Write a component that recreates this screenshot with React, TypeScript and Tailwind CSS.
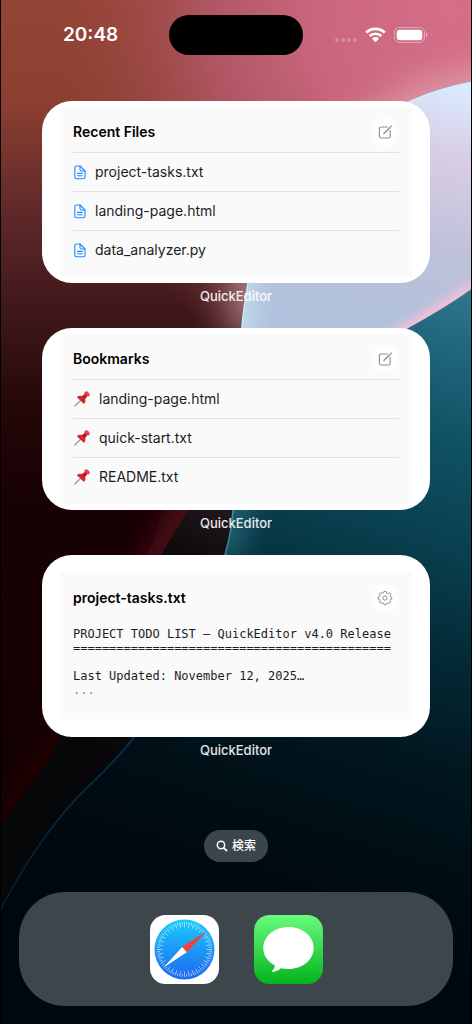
import React from "react";

const SANS = "font-['Inter','Noto_Sans_CJK_JP',sans-serif]";

const BLADE_EDGE =
  "M474 82 Q440 88 411 101 C310 150 262 215 248 283 C246 296 243 312 242 328 C238 400 244 450 233 510 C232 527 229 541 225 555 C206 625 172 684 134 737 C116 762 94 780 74 801 C46 832 22 868 0 911";
const BAND_EDGE = "M260 410 C230 445 207 480 188 510 L161 555 C120 625 92 684 61 737 C46 766 24 797 0 827";

function Wallpaper() {
  return (
    <svg
      className="absolute inset-0 -z-10 h-full w-full"
      viewBox="0 0 472 1024"
      preserveAspectRatio="xMidYMid slice"
      aria-hidden="true"
    >
      <defs>
        <linearGradient id="wp-base" x1="0" y1="0" x2="0" y2="1024" gradientUnits="userSpaceOnUse">
          <stop offset="0" stopColor="#944434" />
          <stop offset="0.1" stopColor="#8c3f31" />
          <stop offset="0.2" stopColor="#622a2a" />
          <stop offset="0.3" stopColor="#40181c" />
          <stop offset="0.4" stopColor="#240709" />
          <stop offset="0.5" stopColor="#170103" />
          <stop offset="1" stopColor="#100002" />
        </linearGradient>
        <radialGradient id="wp-pink" cx="450" cy="10" r="400" gradientUnits="userSpaceOnUse">
          <stop offset="0" stopColor="#d66e8a" />
          <stop offset="0.35" stopColor="#c9667c" />
          <stop offset="0.6" stopColor="#b05663" />
          <stop offset="1" stopColor="#97463d" stopOpacity="0" />
        </radialGradient>
        <linearGradient id="wp-blade" x1="440" y1="80" x2="360" y2="340" gradientUnits="userSpaceOnUse">
          <stop offset="0" stopColor="#d9ecff" />
          <stop offset="0.25" stopColor="#d9cde6" />
          <stop offset="0.6" stopColor="#bdc1d8" />
          <stop offset="1" stopColor="#afc1dc" />
        </linearGradient>
        <linearGradient id="wp-teal" x1="472" y1="270" x2="270" y2="930" gradientUnits="userSpaceOnUse">
          <stop offset="0" stopColor="#3a7d97" />
          <stop offset="0.1" stopColor="#22697f" />
          <stop offset="0.25" stopColor="#0f5164" />
          <stop offset="0.4" stopColor="#093f4e" />
          <stop offset="0.55" stopColor="#032935" />
          <stop offset="0.7" stopColor="#01171f" />
          <stop offset="0.85" stopColor="#000d14" />
          <stop offset="1" stopColor="#00080e" />
        </linearGradient>
        <linearGradient id="wp-rim" x1="0" y1="80" x2="0" y2="920" gradientUnits="userSpaceOnUse">
          <stop offset="0" stopColor="#c4f5ff" />
          <stop offset="0.3" stopColor="#bdeaf8" />
          <stop offset="0.5" stopColor="#3a93a9" />
          <stop offset="0.62" stopColor="#1e6f88" />
          <stop offset="0.8" stopColor="#08304a" />
          <stop offset="1" stopColor="#041a2e" />
        </linearGradient>
        <linearGradient id="wp-band" x1="230" y1="500" x2="60" y2="800" gradientUnits="userSpaceOnUse">
          <stop offset="0" stopColor="#251a1d" />
          <stop offset="0.2" stopColor="#0f0a0c" />
          <stop offset="1" stopColor="#060709" />
        </linearGradient>
        <linearGradient id="wp-red" x1="0" y1="450" x2="0" y2="830" gradientUnits="userSpaceOnUse">
          <stop offset="0" stopColor="#8a1a2a" />
          <stop offset="0.3" stopColor="#6a1420" />
          <stop offset="0.7" stopColor="#2a0307" />
          <stop offset="1" stopColor="#220206" />
        </linearGradient>
        <filter id="wp-soft" filterUnits="userSpaceOnUse" x="-100" y="-100" width="700" height="1200">
          <feGaussianBlur stdDeviation="20" />
        </filter>
        <filter id="wp-glow" filterUnits="userSpaceOnUse" x="-100" y="-100" width="700" height="1200">
          <feGaussianBlur stdDeviation="14" />
        </filter>
        <filter id="wp-fine" filterUnits="userSpaceOnUse" x="-100" y="-100" width="700" height="1200">
          <feGaussianBlur stdDeviation="4" />
        </filter>
        <clipPath id="wp-clip">
          <path d={`${BLADE_EDGE} L0 1024 L474 1024 Z`} />
        </clipPath>
        <clipPath id="wp-left">
          <path d={`${BAND_EDGE} L0 410 Z`} />
        </clipPath>
      </defs>
      <rect width="472" height="1024" fill="url(#wp-base)" />
      <rect width="472" height="1024" fill="url(#wp-pink)" />
      <path
        d="M520 90 Q440 96 400 125 C330 170 280 220 256 290 L250 335"
        fill="none"
        stroke="#eec3ce"
        strokeOpacity="0.65"
        strokeWidth="44"
        filter="url(#wp-soft)"
      />
      <path d={`${BAND_EDGE} L0 911 L240 911 L260 410 Z`} fill="url(#wp-band)" />
      <g clipPath="url(#wp-left)">
        <path d={BAND_EDGE} fill="none" stroke="url(#wp-red)" strokeOpacity="0.75" strokeWidth="26" filter="url(#wp-glow)" />
      </g>
      <g clipPath="url(#wp-clip)">
        <rect width="474" height="1024" fill="url(#wp-blade)" />
        <path d="M240 270 L236 350" stroke="#dcf4ff" strokeWidth="24" strokeOpacity="0.7" filter="url(#wp-glow)" />
        <path d="M520 254 L474 287 Q413 333 220 420" fill="none" stroke="#f6c0d8" strokeWidth="12" filter="url(#wp-fine)" />
        <path d="M474 287 Q413 333 220 420 L0 900 L0 1024 L474 1024 Z" fill="url(#wp-teal)" />
        <path d="M240 470 L225 560" stroke="#3a8ba0" strokeWidth="26" strokeOpacity="0.6" filter="url(#wp-glow)" />
      </g>
      <path d={BLADE_EDGE} fill="none" stroke="url(#wp-rim)" strokeWidth="1.6" />
    </svg>
  );
}

function WifiIcon() {
  return (
    <svg className="h-4 w-[21px]" viewBox="0 0 21 16" aria-hidden="true">
      <g fill="none" stroke="#fff" strokeWidth="2.7">
        <path d="M1.2 5.6 A13.4 13.4 0 0 1 19.8 5.6" />
        <path d="M4.6 9.1 A8.6 8.6 0 0 1 16.4 9.1" />
      </g>
      <path d="M7 11.5 A5 5 0 0 1 14 11.5 L10.5 15.2 Z" fill="#fff" />
    </svg>
  );
}

function BatteryIcon() {
  return (
    <svg className="h-4 w-[34px]" viewBox="0 0 34 16" aria-hidden="true">
      <rect x="0.5" y="0.5" width="30" height="15" rx="5" fill="none" stroke="#fff" strokeOpacity="0.4" />
      <rect x="2.7" y="2.7" width="25.6" height="10.6" rx="3.2" fill="#fff" />
      <path d="M32 5.5 C33.8 6.2 33.8 9.8 32 10.5 Z" fill="#fff" fillOpacity="0.5" />
    </svg>
  );
}

function StatusBar() {
  return (
    <header className="grid grid-cols-[1fr_134px_1fr] items-center pt-[15px]">
      <time className="pl-[62px] text-[19px] leading-7 font-semibold text-white">20:48</time>
      <div className="h-10 rounded-full bg-black" />
      <div className="flex items-center justify-end gap-2 pr-[43px]">
        <div className="flex gap-[2px] pt-2.5">
          {[0, 1, 2, 3].map((n) => (
            <span key={n} className="size-1 rounded-full bg-white/25" />
          ))}
        </div>
        <WifiIcon />
        <BatteryIcon />
      </div>
    </header>
  );
}

function ComposeIcon() {
  return (
    <svg className="size-4" viewBox="0 0 16 16" fill="none" stroke="#8e8e93" strokeWidth="1.1" strokeLinecap="round" aria-hidden="true">
      <path d="M10.4 3 H4.2 Q2.4 3 2.4 4.8 V12.2 Q2.4 14 4.2 14 H11.4 Q13.2 14 13.2 12.2 V6.2" />
      <path d="M6.9 9.5 L13 3.4" strokeWidth="1.4" />
      <path d="M14 2.5 L14.3 2.2" strokeWidth="1.4" />
    </svg>
  );
}

function GearIcon() {
  return (
    <svg className="size-4" viewBox="0 0 24 24" fill="none" stroke="#8e8e93" strokeWidth="1.5" strokeLinejoin="round" aria-hidden="true">
      <circle cx="12" cy="12" r="3.2" />
      <path d="M10.3 2.2 H13.7 L14.4 4.8 L16.3 5.6 L18.6 4.2 L20.8 6.5 L19.5 8.8 L20.2 10.4 L22.2 10.9 V13.7 L20 14.3 L19.3 16.1 L20.5 18 L18.2 20.4 L16.2 19.1 L14.4 19.9 L13.8 22 H10.4 L9.8 19.9 L7.9 19.1 L5.9 20.3 L3.6 18 L4.8 16 L4 14.3 L1.8 13.7 V10.5 L4 9.9 L4.7 8.1 L3.5 6.2 L5.8 3.9 L7.8 5.1 L9.6 4.4 Z" />
    </svg>
  );
}

function FileIcon() {
  return (
    <svg className="h-[15px] w-3" viewBox="0 0 12 15" fill="none" stroke="#1e88ff" strokeWidth="1.1" strokeLinejoin="round" strokeLinecap="round" aria-hidden="true">
      <path d="M6 1 H2.6 Q0.8 1 0.8 2.8 V11.9 Q0.8 13.7 2.6 13.7 H9.2 Q11 13.7 11 11.9 V6 Z" />
      <path d="M6 1 V4.6 Q6 6 7.4 6 H11" />
      <path d="M3.6 8.4 H8.3 M3.6 10.8 H8.3" />
    </svg>
  );
}

function PinIcon() {
  return (
    <svg className="h-4 w-[18px]" viewBox="0 0 18 16" aria-hidden="true">
      <path d="M8.3 8.8 L1.8 15" stroke="#8b98a5" strokeWidth="1.2" strokeLinecap="round" />
      <path d="M3.9 6.3 C5.4 4.7 7.3 4.6 8.8 5.2 L11.6 3.2 C11.1 1.8 11.9 .7 13.2 .6 C15 .7 16.5 2.3 16.5 3.9 C16.4 5.1 15.2 5.7 14 5.3 L12.1 8.1 C12.8 9.7 12.5 11.6 11 13.1 Z" fill="#d8262f" />
      <path d="M8.8 5.2 L11.6 3.2 C12 4.3 12.8 5 14 5.3 L12.1 8.1 C10.4 7.7 9.4 6.8 8.8 5.2 Z" fill="#b51f2c" />
      <ellipse cx="14.4" cy="2.7" rx="2.5" ry="1.4" transform="rotate(45 14.4 2.7)" fill="#f0444a" />
    </svg>
  );
}

function WidgetHeader({ title, action, children }: { title: string; action: string; children: React.ReactNode }) {
  return (
    <div className="flex items-center justify-between">
      <h2 className="text-sm font-semibold text-black">{title}</h2>
      <button type="button" aria-label={action} className="flex size-7 items-center justify-center rounded-full bg-[#fefefe]">
        {children}
      </button>
    </div>
  );
}

function Widget({ inset, children }: { inset: string; children: React.ReactNode }) {
  return (
    <section>
      <div className={`flex min-h-[182px] flex-col rounded-[30px] bg-white px-[18px] ${inset}`}>
        <div className="flex-1 bg-[#fafafa] px-[13px] pt-[11px]">{children}</div>
      </div>
      <p className="mt-[5px] text-center text-[13px] leading-4 font-medium text-white/90">QuickEditor</p>
    </section>
  );
}

function FileList({ files, pinned }: { files: string[]; pinned?: boolean }) {
  return (
    <ul className="mt-1.5">
      {files.map((file) => (
        <li key={file} className="border-t border-[#e2e2e4]">
          <a
            href="#"
            className={
              pinned
                ? "flex h-[38px] items-center gap-2 text-sm text-[#1c1c1e]"
                : "flex h-[38px] items-center gap-[9px] pl-px text-sm text-[#1c1c1e]"
            }
          >
            {pinned ? <PinIcon /> : <FileIcon />}
            <span>{file}</span>
          </a>
        </li>
      ))}
    </ul>
  );
}

function SafariIcon() {
  const ticks = Array.from({ length: 72 }, (_, i) => i);
  return (
    <svg className="size-[69px]" viewBox="0 0 69 69" aria-hidden="true">
      <defs>
        <linearGradient id="safari" x1="0" y1="0" x2="0" y2="1">
          <stop offset="0" stopColor="#1bccfc" />
          <stop offset="1" stopColor="#1f66f0" />
        </linearGradient>
      </defs>
      <rect width="69" height="69" rx="15.5" fill="#fff" />
      <circle cx="34.5" cy="34.5" r="30" fill="url(#safari)" />
      <g stroke="#fff" strokeOpacity="0.75" strokeWidth="0.7">
        {ticks.map((i) => (
          <line key={i} x1="34.5" y1="7" x2="34.5" y2={i % 2 ? 9.8 : 12.4} transform={`rotate(${i * 5} 34.5 34.5)`} />
        ))}
      </g>
      <path d="M55.8 16.8 L32.2 31.9 L36.8 37.2 Z" fill="#ff3b30" />
      <path d="M13.6 52.4 L32.2 31.9 L36.8 37.2 Z" fill="#fff" />
    </svg>
  );
}

function MessagesIcon() {
  return (
    <svg className="size-[69px]" viewBox="0 0 69 69" aria-hidden="true">
      <defs>
        <linearGradient id="messages" x1="0" y1="0" x2="0" y2="1">
          <stop offset="0" stopColor="#69fb7e" />
          <stop offset="1" stopColor="#04b31c" />
        </linearGradient>
      </defs>
      <rect width="69" height="69" rx="15.5" fill="url(#messages)" />
      <path
        d="M34.5 12 C20.5 12 9.3 21.2 9.3 33 C9.3 40.3 13.4 46.5 20.6 50.3 C21 52.4 19.8 54.6 18 56.2 C17.7 56.7 18 57 18.5 56.9 C21.5 56.6 24.6 55.4 27 53.2 C29.4 53.8 31.9 54 34.5 54 C48.5 54 59.7 44.8 59.7 33 C59.7 21.2 48.5 12 34.5 12 Z"
        fill="#fff"
      />
    </svg>
  );
}

export default function App() {
  return (
    <main className={`relative isolate flex min-h-screen flex-col overflow-hidden border-x border-black antialiased ${SANS}`}>
      <Wallpaper />
      <StatusBar />

      <div className="mt-[46px] flex flex-col gap-6 px-[41px]">
        <Widget inset="py-1.5">
          <WidgetHeader title="Recent Files" action="New file">
            <ComposeIcon />
          </WidgetHeader>
          <FileList files={["project-tasks.txt", "landing-page.html", "data_analyzer.py"]} />
        </Widget>

        <Widget inset="py-1.5">
          <WidgetHeader title="Bookmarks" action="New file">
            <ComposeIcon />
          </WidgetHeader>
          <FileList pinned files={["landing-page.html", "quick-start.txt", "README.txt"]} />
        </Widget>

        <Widget inset="py-[18px]">
          <WidgetHeader title="project-tasks.txt" action="Settings">
            <GearIcon />
          </WidgetHeader>
          <div className="mt-[15px] font-['DejaVu_Sans_Mono',monospace] text-xs leading-[14px] whitespace-pre text-[#1c1c1e]">
            <p>PROJECT TODO LIST – QuickEditor v4.0 Release</p>
            <p>{"=".repeat(44)}</p>
            <p className="mt-3.5">Last Updated: November 12, 2025…</p>
            <p className="text-[#8e8e93]">...</p>
          </div>
        </Widget>
      </div>

      <button
        type="button"
        className="mx-auto mt-auto mb-[30px] flex h-8 w-16 items-center justify-center gap-1 rounded-full bg-[#3b464c] text-xs font-medium text-white"
      >
        <svg className="size-3" viewBox="0 0 12 12" fill="none" stroke="#fff" strokeWidth="1.5" strokeLinecap="round" aria-hidden="true">
          <circle cx="5" cy="5" r="3.7" />
          <path d="M7.8 7.8 L10.6 10.6" strokeWidth="1.8" />
        </svg>
        検索
      </button>

      <nav className="mx-[18px] mb-[18px] flex h-[114px] items-center justify-center gap-[35px] rounded-[46px] bg-[#3d464b]">
        <a href="#" aria-label="Safari">
          <SafariIcon />
        </a>
        <a href="#" aria-label="Messages">
          <MessagesIcon />
        </a>
      </nav>
    </main>
  );
}
